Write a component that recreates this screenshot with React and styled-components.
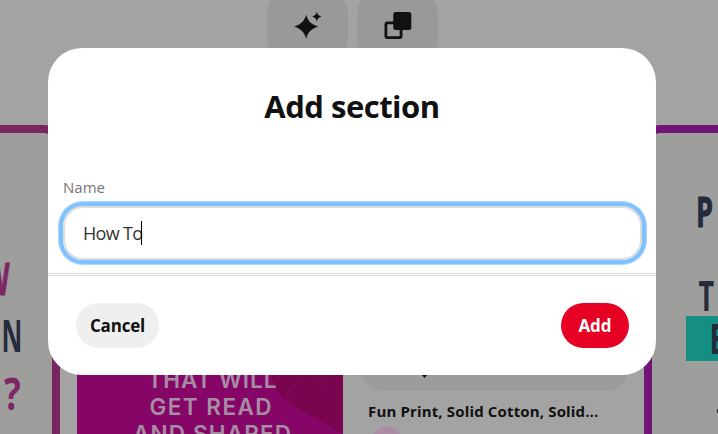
// src/App.jsx
import React, { useState } from 'react';
import styled, { createGlobalStyle } from 'styled-components';

const GlobalStyle = createGlobalStyle`
  * {
    box-sizing: border-box;
  }

  body {
    margin: 0;
    overflow: hidden;
    font-family: 'Open Sans', 'Noto Sans', sans-serif;
    color: #111;
  }
`;

// --- Board behind the dialog ---
const Page = styled.div`
  position: relative;
  width: 718px;
  height: 434px;
  overflow: hidden;
  background: #a3a3a3;
`;

const Toolbar = styled.div`
  display: flex;
  align-items: flex-start;
  gap: 9px;
  height: 125px;
  padding-left: 267px;
  overflow: hidden;
`;

const ToolButton = styled.div`
  display: flex;
  align-items: center;
  justify-content: center;
  width: 81px;
  height: 72px;
  margin-top: -10px;
  border-radius: 24px;
  background: #999;
`;

const Board = styled.div`
  display: grid;
  grid-template-columns: 60px 584px 74px;
  height: 309px;
`;

const SidePin = styled.div`
  overflow: hidden;
  background: #9e9e9d;
  border-top: 8px solid ${props => props.$color};
  border-left: ${props => (props.$side === 'right' ? `8px solid ${props.$color}` : 'none')};
  border-right: ${props => (props.$side === 'left' ? `8px solid ${props.$color}` : 'none')};
  border-radius: ${props => (props.$side === 'left' ? '0 16px 0 0' : '16px 0 0 0')};
`;

const Art = styled.svg`
  display: block;
`;

const Pins = styled.div`
  display: flex;
  align-items: flex-start;
  gap: 18px;
  padding-left: 17px;
  overflow: hidden;
`;

const PinColumn = styled.div`
  width: 266px;
  padding-top: ${props => props.$offset || 0}px;
`;

const PinImage = styled.div`
  display: flex;
  height: 266px;
  align-items: flex-end;
  border-radius: 0 0 20px 20px;
  background: #9c9c9c;
  overflow: hidden;
`;

const PinTitle = styled.div`
  padding: 9px 0 0 7px;
  font-size: 15px;
  font-weight: 700;
  line-height: 22px;
  letter-spacing: 0.15px;
  white-space: nowrap;
`;

const Avatar = styled.div`
  width: 32px;
  height: 32px;
  margin: 5px 0 0 10px;
  border-radius: 50%;
  background: #ad8ba5;
`;

// --- Dialog ---
const Overlay = styled.div`
  position: absolute;
  inset: 0;
  padding: 48px 0 0 48px;
`;

const Dialog = styled.form`
  display: flex;
  flex-direction: column;
  width: 608px;
  height: 327px;
  border-radius: 34px;
  background: #fff;
  overflow: hidden;
`;

const Title = styled.h1`
  margin: 0;
  padding-top: 36px;
  font-size: 31px;
  font-weight: 700;
  line-height: 44px;
  letter-spacing: -0.5px;
  text-align: center;
`;

const Field = styled.label`
  display: flex;
  flex-direction: column;
  padding: 49px 14px 0 15px;
`;

const Label = styled.span`
  height: 29px;
  font-size: 15px;
  line-height: 20px;
  color: #767676;
`;

const InputBox = styled.div`
  display: flex;
  align-items: center;
  height: 54px;
  padding-left: 18px;
  border: 2px solid #ddd;
  border-radius: 20px;
  box-shadow: 0 0 0 4px #80c1ff, 0 0 0 5px #a9d5ff;
`;

const Value = styled.span`
  font-size: 18px;
  line-height: 24px;
  letter-spacing: -0.7px;
  color: #333;
`;

const Caret = styled.span`
  width: 1px;
  height: 24px;
  margin-left: -1px;
  background: #000;
`;

const Footer = styled.div`
  display: flex;
  align-items: flex-start;
  justify-content: space-between;
  margin-top: 13px;
  padding: 27px 27px 0 28px;
  border-top: 3px double #d8d8d8;
`;

const Button = styled.button`
  width: ${props => props.$width}px;
  height: 45px;
  padding: 0;
  border: none;
  border-radius: 23px;
  background: ${props => (props.$primary ? '#e60023' : '#efefef')};
  color: ${props => (props.$primary ? '#fff' : '#111')};
  font-family: inherit;
  font-size: 17px;
  font-weight: 700;
  letter-spacing: ${props => (props.$primary ? '0' : '-0.2px')};
  cursor: pointer;
`;

const SparkleIcon = () => (
    <svg width="28" height="28" viewBox="0 0 28 28" fill="#111">
        <path d="M12.2 2.8C14 9 16.3 11.8 24.2 14.6C16.3 17.5 14 20.2 12.2 26.8C10.2 20.2 7.9 17.5 0.2 14.6C7.9 11.8 10.2 9 12.2 2.8Z" />
        <path d="M22.8 0C23.6 2.6 24.7 3.7 27.4 4.6C24.7 5.5 23.6 6.6 22.8 9.2C21.9 6.6 20.8 5.5 18.2 4.6C20.8 3.7 21.9 2.6 22.8 0Z" />
    </svg>
);

const OrganizeIcon = () => (
    <svg width="28" height="28" viewBox="0 0 28 28">
        <rect x="1.9" y="10.9" width="15.2" height="14.7" rx="1.5" fill="none" stroke="#111" strokeWidth="2.8" />
        <rect x="9.3" y="0" width="18" height="18" rx="2.5" fill="#111" />
    </svg>
);

const LeftArt = () => (
    <Art width="52" height="301" viewBox="0 133 52 301" fontFamily="Open Sans" fontWeight="700">
        <text transform="translate(-16 295) scale(0.6 1)" fontSize="44" fill="#7b2865" stroke="#7b2865">W</text>
        <text transform="translate(1.5 352) scale(0.57 1)" fontSize="45" fill="#252c3d">N</text>
        <text transform="translate(4 410) scale(0.78 1)" fontSize="45" fill="#7b2865">?</text>
    </Art>
);

const RightArt = () => (
    <Art width="66" height="301" viewBox="652 133 66 301" fontFamily="Open Sans" fontWeight="700" fill="#252a3c">
        <rect x="686" y="316" width="32" height="45" fill="#158e83" />
        <text transform="translate(696 227) scale(0.66 1)" fontSize="41" stroke="#252a3c">P</text>
        <text transform="translate(698.5 311) scale(0.66 1)" fontSize="41">T</text>
        <text transform="translate(709.5 354) scale(0.68 1)" fontSize="42">E</text>
        <rect x="717" y="409" width="1" height="4" />
    </Art>
);

const ArticleArt = () => (
    <Art width="266" height="301" viewBox="77 133 266 301">
        <rect x="77" y="133" width="266" height="301" fill="#850667" />
        <path d="M264 365L284 400L343 434V133H264Z" fill="#79054f" />
        <path d="M77 434L120 370M284 400L306 370M306 370L328 389M324 375L336 362" stroke="#83105c" strokeWidth="1" fill="none" />
        <g fontFamily="Inter" fontWeight="600" fontSize="22.5" fill="#a68da3" textAnchor="middle">
            <text x="212" y="387.5" textLength="129">THAT WILL</text>
            <text x="210.5" y="415" textLength="122">GET READ</text>
            <text x="212" y="442" textLength="158">AND SHARED</text>
        </g>
    </Art>
);

const App = () => {
    const [name] = useState('How To');

    return (
        <Page>
            <GlobalStyle />
            <Toolbar>
                <ToolButton><SparkleIcon /></ToolButton>
                <ToolButton><OrganizeIcon /></ToolButton>
            </Toolbar>

            <Board>
                <SidePin $side="left" $color="#792660"><LeftArt /></SidePin>
                <Pins>
                    <PinColumn $offset={8}>
                        <ArticleArt />
                    </PinColumn>
                    <PinColumn>
                        <PinImage>
                            <svg width="266" height="30" viewBox="361 361 266 30">
                                <path d="M420 373H429L424.5 378Z" fill="#111" />
                            </svg>
                        </PinImage>
                        <PinTitle>Fun Print, Solid Cotton, Solid...</PinTitle>
                        <Avatar />
                    </PinColumn>
                </Pins>
                <SidePin $side="right" $color="#721476"><RightArt /></SidePin>
            </Board>

            <Overlay>
                <Dialog onSubmit={(e) => e.preventDefault()}>
                    <Title>Add section</Title>
                    <Field>
                        <Label>Name</Label>
                        <InputBox>
                            <Value>{name}</Value>
                            <Caret />
                        </InputBox>
                    </Field>
                    <Footer>
                        <Button type="button" $width={83}>Cancel</Button>
                        <Button type="submit" $primary $width={68}>Add</Button>
                    </Footer>
                </Dialog>
            </Overlay>
        </Page>
    );
};

export default App;
